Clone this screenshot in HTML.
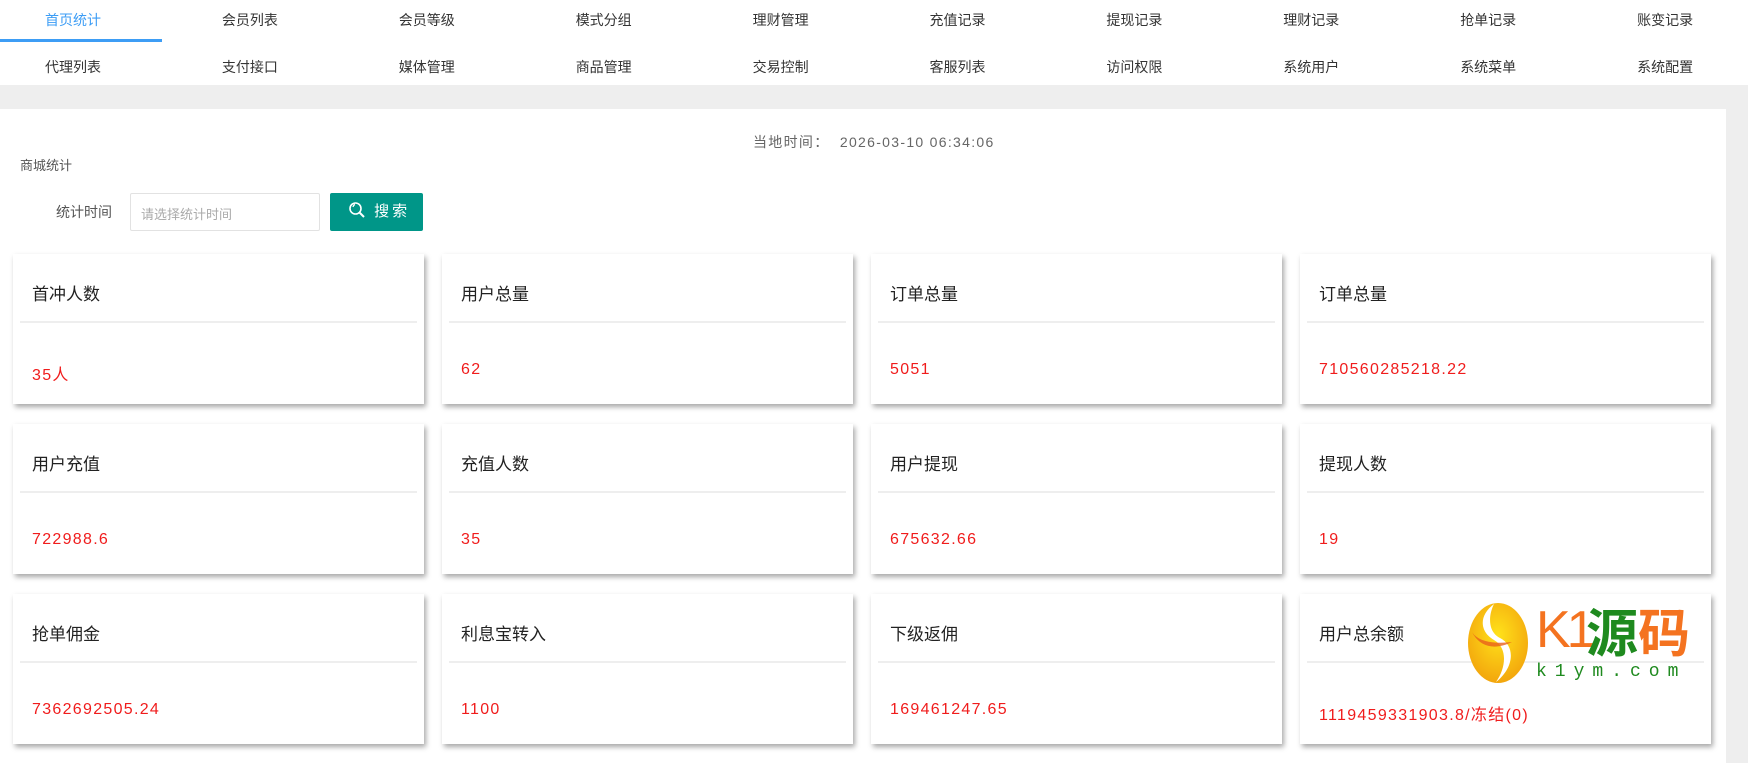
<!DOCTYPE html>
<html><head><meta charset="utf-8"><style>
*{margin:0;padding:0;box-sizing:border-box}
body{width:1748px;height:763px;overflow:hidden;background:#fff;font-family:"Liberation Sans","Noto Sans CJK SC",sans-serif;position:relative}
.t{position:absolute;font-size:14px;color:#333;line-height:20px;white-space:nowrap}
.gray{position:absolute;background:#eee}
.card{position:absolute;width:411px;height:150px;background:#fff;box-shadow:2px 3px 5px rgba(0,0,0,.35)}
.card .h{position:absolute;left:19px;top:26px;font-size:17px;color:#222}
.card .d{position:absolute;left:7px;right:7px;top:67px;height:2px;background:#eee}
.card .v{position:absolute;left:19px;top:107px;font-size:16px;color:#f01c1c;letter-spacing:1.3px}
</style></head><body>
<div id="tabs"></div>
<div style="position:absolute;left:0;top:39px;width:162px;height:3px;background:#3d9df5"></div>
<div class="gray" style="left:0;top:85px;width:1748px;height:24px"></div>
<div class="gray" style="left:1726px;top:85px;width:22px;height:678px"></div>
<div class="t" style="left:753px;top:132px;color:#666;font-size:14px;letter-spacing:1.3px">当地时间：&nbsp; 2026-03-10 06:34:06</div>
<div class="t" style="left:20px;top:156px;font-size:13px;color:#555">商城统计</div>
<div class="t" style="left:56px;top:202px;color:#555">统计时间</div>
<div style="position:absolute;left:130px;top:193px;width:190px;height:38px;border:1px solid #e2e2e2;border-radius:2px;font-size:13px;color:#aaa;padding:10px 10px;font-family:'Liberation Sans','Noto Sans CJK SC',sans-serif">请选择统计时间</div>
<div style="position:absolute;left:330px;top:193px;width:93px;height:38px;background:#009688;border-radius:2px;color:#fff;font-size:15px;line-height:38px;padding-left:18px">
<svg width="18" height="18" viewBox="0 0 18 18" style="vertical-align:-3px"><circle cx="7.5" cy="7.5" r="5.5" fill="none" stroke="#fff" stroke-width="1.6"/><path d="M11.5 11.5L16 16" stroke="#fff" stroke-width="2"/><path d="M5 6a3 3 0 0 1 2-2.5" stroke="#fff" stroke-width="1.2" fill="none"/></svg>
<span style="margin-left:4px;letter-spacing:3px">搜索</span></div>
<div id="cards"></div>
<svg style="position:absolute;left:1466px;top:602px" width="64" height="82" viewBox="0 0 64 82">
<defs><radialGradient id="g" cx="50%" cy="40%" r="60%"><stop offset="0" stop-color="#ffe21a"/><stop offset="1" stop-color="#f3a60d"/></radialGradient></defs>
<ellipse cx="32" cy="41" rx="30" ry="40" fill="url(#g)"/>
<path d="M28 2C12 14 14 30 28 38C42 46 40 66 30 80C48 66 50 44 34 36C22 30 22 14 28 2Z" fill="#fff"/>
<path d="M6 30C12 40 28 42 46 40C30 48 14 46 6 30Z" fill="#e8601c" opacity=".8"/>
</svg>
<div style="position:absolute;left:1536px;top:600px;font-size:52px;line-height:60px;color:#f47320;font-family:'Liberation Sans',sans-serif;letter-spacing:-4px">K1</div>
<div style="position:absolute;left:1586px;top:600px;font-size:52px;line-height:60px;font-family:'Noto Sans CJK SC',sans-serif;font-weight:bold"><span style="color:#1f8a1f">源</span><span style="color:#f47320">码</span></div>
<div style="position:absolute;left:1536px;top:662px;font-size:18px;line-height:20px;color:#1f8a1f;letter-spacing:8px;font-family:'Liberation Mono',monospace">k1ym.com</div>
<script>
var r1=["首页统计","会员列表","会员等级","模式分组","理财管理","充值记录","提现记录","理财记录","抢单记录","账变记录"],
r2=["代理列表","支付接口","媒体管理","商品管理","交易控制","客服列表","访问权限","系统用户","系统菜单","系统配置"],h="";
for(var i=0;i<10;i++){var x=45+176.9*i;
h+='<div class="t" style="left:'+x+'px;top:10px;'+(i==0?'color:#3d9df5':'')+'">'+r1[i]+'</div>';
h+='<div class="t" style="left:'+x+'px;top:57px">'+r2[i]+'</div>';}
document.getElementById('tabs').innerHTML=h;
var c=[["首冲人数","35人"],["用户总量","62"],["订单总量","5051"],["订单总量","710560285218.22"],
["用户充值","722988.6"],["充值人数","35"],["用户提现","675632.66"],["提现人数","19"],
["抢单佣金","7362692505.24"],["利息宝转入","1100"],["下级返佣","169461247.65"],["用户总余额","1119459331903.8/冻结(0)"]],s="";
for(var k=0;k<12;k++){var x=13+429*(k%4),y=254+170*Math.floor(k/4);
s+='<div class="card" style="left:'+x+'px;top:'+y+'px"><div class="h">'+c[k][0]+'</div><div class="d"></div><div class="v">'+c[k][1]+'</div></div>';}
document.getElementById('cards').innerHTML=s;
</script>
</body></html>
